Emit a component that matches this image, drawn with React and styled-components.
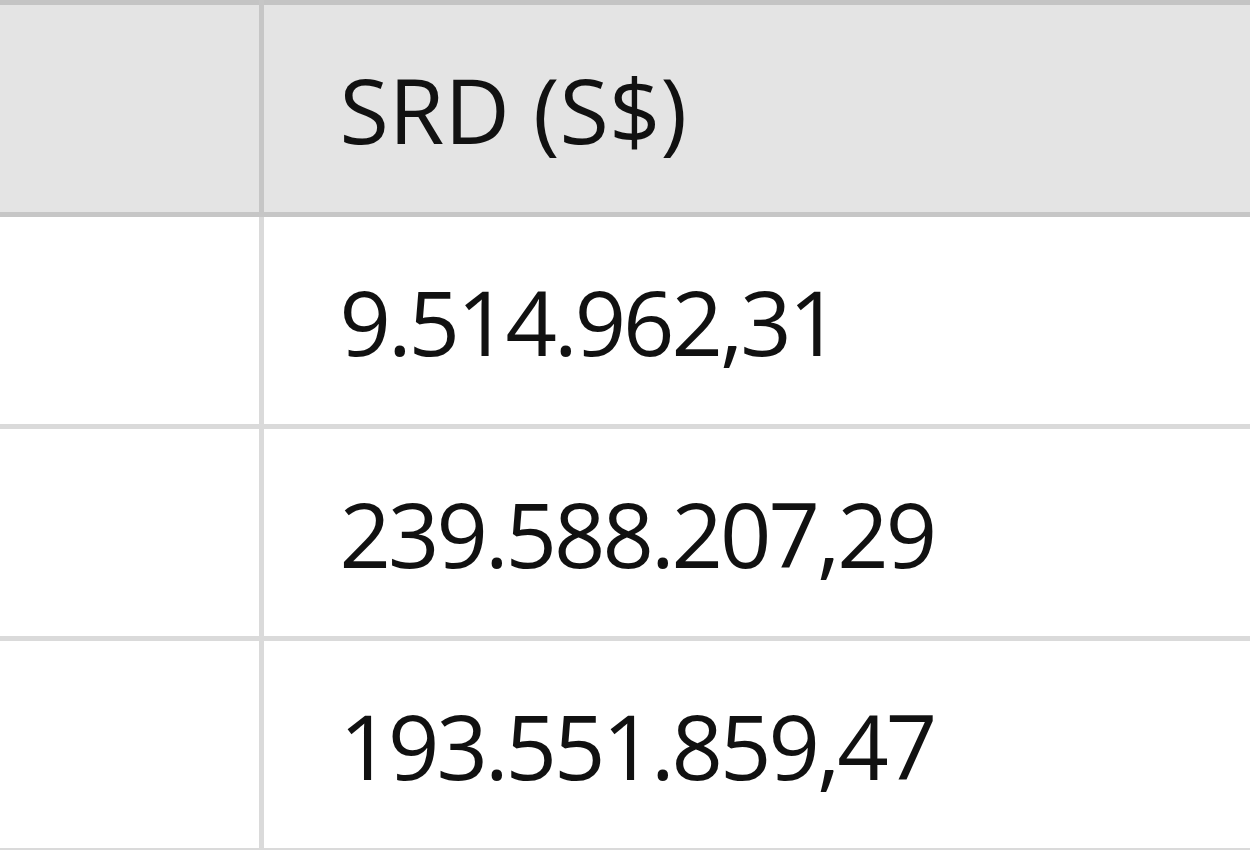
import React from 'react';
import styled, { createGlobalStyle } from 'styled-components';

const rows = ['9.514.962,31', '239.588.207,29', '193.551.859,47'];

const GlobalStyle = createGlobalStyle`
    html, body {
        margin: 0;
        padding: 0;
        background: #ffffff;
        overflow: hidden;
    }
`;

const Grid = styled.table`
    border-collapse: collapse;
    width: 1250px;
    table-layout: fixed;
    border-top: 5px solid #c4c4c4;
    font-family: 'Open Sans', 'Liberation Sans', sans-serif;
    font-size: 90px;
    color: #111111;

    col.blank {
        width: 261px;
    }
`;

const HeadCell = styled.th`
    height: 207px;
    padding: 0 0 0 76px;
    background: #e4e4e4;
    border-bottom: 5px solid #c6c6c6;
    border-right: ${(p) => (p.$first ? '5px solid #c6c6c6' : 'none')};
    font-weight: 400;
    text-align: left;
    vertical-align: middle;
    white-space: nowrap;
`;

const Cell = styled.td`
    height: 207px;
    padding: 0 0 0 76px;
    border-bottom: 5px solid #dadada;
    border-right: ${(p) => (p.$first ? '5px solid #dadada' : 'none')};
    letter-spacing: -3px;
    white-space: nowrap;
    vertical-align: middle;
`;

const App = () => {
    return (
        <>
            <GlobalStyle />
            <Grid>
                <colgroup>
                    <col className="blank" />
                    <col />
                </colgroup>
                <thead>
                    <tr>
                        <HeadCell $first />
                        <HeadCell>SRD (S$)</HeadCell>
                    </tr>
                </thead>
                <tbody>
                    {rows.map((value) => (
                        <tr key={value}>
                            <Cell $first />
                            <Cell>{value}</Cell>
                        </tr>
                    ))}
                </tbody>
            </Grid>
        </>
    );
};

export default App;
